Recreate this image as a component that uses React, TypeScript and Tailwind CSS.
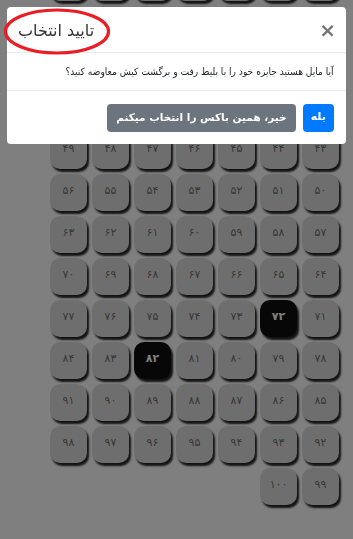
import { useLayoutEffect, useRef } from "react";

const faDigits = "۰۱۲۳۴۵۶۷۸۹";
const toFa = (n: number) =>
  String(n)
    .split("")
    .map((d) => faDigits[Number(d)])
    .join("");

const selected = [72, 82];
const boxes = Array.from({ length: 100 }, (_, i) => i + 1);

function NumberBox({ n }: { n: number }) {
  const active = selected.includes(n);
  return (
    <div
      className={
        "flex h-[37px] w-[37px] items-center justify-center rounded-[10px] pb-[3px] text-[11px] shadow-[2px_3px_2px_rgba(0,0,0,0.85)] " +
        (active ? "bg-[#0e0e0e] font-bold text-white" : "bg-[#dddddd] text-[#707070]")
      }
    >
      {toFa(n)}
    </div>
  );
}

function ConfirmModal() {
  return (
    <div className="fixed inset-0 z-20 p-[7px]">
      <div className="overflow-hidden rounded-[4px] bg-white">
        <div className="flex h-[46px] items-center justify-between border-b border-[#e9ecef] pl-[11px] pr-[10px]">
          <h5 dir="rtl" className="pt-[2px] text-[16px] text-[#333]">
            تایید انتخاب
          </h5>
          <button type="button" className="text-[20px] font-bold leading-none text-black/55">
            ×
          </button>
        </div>
        <div dir="rtl" className="flex h-[38px] items-center border-b border-[#e9ecef] px-[12px] text-[#212529]">
          <span className="inline-block origin-right scale-x-[0.91] whitespace-nowrap text-[10px]">
            آیا مایل هستید جایزه خود را با بلیط رفت و برگشت کیش معاوضه کنید؟
          </span>
        </div>
        <div className="flex h-[53px] items-center justify-end gap-[7px] px-[12px]">
          <button
            type="button"
            className="h-[28px] rounded-[4px] bg-[#6c757d] px-[9px] text-[10.5px] font-bold text-white"
          >
            خیر، همین باکس را انتخاب میکنم
          </button>
          <button
            type="button"
            className="h-[28px] rounded-[4px] bg-[#007bff] px-[8px] text-[11px] font-bold text-white"
          >
            بله
          </button>
        </div>
      </div>
    </div>
  );
}

export default function App() {
  const scroller = useRef<HTMLDivElement>(null);

  useLayoutEffect(() => {
    if (scroller.current) scroller.current.scrollTop = 136;
  }, []);

  return (
    <div className="relative h-[539px] w-full overflow-hidden bg-white font-['DejaVu_Sans',sans-serif]">
      <div ref={scroller} className="h-[539px] overflow-hidden">
        <div dir="rtl" className="px-[14px] pb-16 pt-4">
          <div className="grid w-fit grid-cols-7 gap-[5px]">
            {boxes.map((n) => (
              <NumberBox key={n} n={n} />
            ))}
          </div>
        </div>
      </div>

      <div className="fixed inset-0 z-10 bg-black/50" />
      <ConfirmModal />

      <svg
        className="pointer-events-none absolute left-[3px] top-[8px] z-30"
        width="108"
        height="48"
        viewBox="0 0 108 48"
      >
        <ellipse
          cx="54"
          cy="23.5"
          rx="51.5"
          ry="21.5"
          fill="none"
          stroke="#ec1c24"
          strokeWidth="3.2"
        />
      </svg>
    </div>
  );
}
